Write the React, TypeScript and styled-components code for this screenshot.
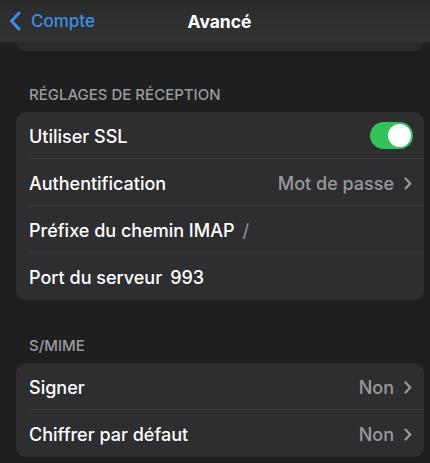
import styled, { createGlobalStyle } from "styled-components";

const Global = createGlobalStyle`
    html, body {
        margin: 0;
        padding: 0;
        background: #1f1f20;
    }
    * {
        box-sizing: border-box;
    }
`;

const Screen = styled.div`
    width: 430px;
    height: 463px;
    overflow: hidden;
    background: #1f1f20;
    font-family: Inter, "Liberation Sans", sans-serif;
    color: #fff;
    display: flex;
    flex-direction: column;
`;
const NavBar = styled.div`
    height: 42px;
    flex-shrink: 0;
    display: grid;
    grid-template-columns: 1fr auto 1fr;
    align-items: center;
    background: linear-gradient(#2b2b2b, #333);
    padding: 0 0 0 9px;
`;
const Back = styled.div`
    display: flex;
    align-items: center;
    gap: 10px;
    color: #3f8ee6;
    font-size: 17px;
    font-weight: 500;
`;
const NavTitle = styled.div`
    font-size: 17.5px;
    font-weight: 700;
`;
const CardTail = styled.div`
    margin: 0 6px 0 16px;
    height: 9px;
    background: #2b2b2d;
    border-radius: 0 0 10px 10px;
`;
const Spacer = styled.div<{ $h: number }>`
    height: ${(p) => p.$h}px;
    flex-shrink: 0;
`;
const SectionHeader = styled.div`
    padding: 0 29px;
    font-size: 15px;
    font-weight: 500;
    color: #9b9b9f;
    height: 20px;
    display: flex;
    align-items: center;
`;
const Card = styled.div`
    margin: 8px 6px 0 16px;
    background: #2e2e30;
    border-radius: 10px;
    overflow: hidden;
`;
const Row = styled.div<{ $last?: boolean }>`
    height: 47px;
    margin-left: 13px;
    padding: 2px 12px 0 0;
    display: flex;
    align-items: center;
    gap: 8px;
    border-bottom: ${(p) => (p.$last ? "none" : "1px solid #3b3b3d")};
    font-size: 18px;
    font-weight: 500;
`;
const Label = styled.span`
    color: #fff;
`;
const Value = styled.span<{ $dim?: boolean }>`
    color: ${(p) => (p.$dim ? "#8a8a8e" : "#fff")};
`;
const Right = styled.div`
    margin-left: auto;
    display: flex;
    align-items: center;
    gap: 10px;
    color: #98989d;
`;
const Toggle = styled.div`
    width: 43px;
    height: 27px;
    border-radius: 14px;
    background: #32c15a;
    margin: -2px -1px 0 0;
    display: flex;
    justify-content: flex-end;
    padding: 2px;
`;
const Knob = styled.div`
    width: 23px;
    height: 23px;
    border-radius: 50%;
    background: #fff;
`;

const Chevron = () => (
    <svg width="8" height="13" viewBox="0 0 8 13">
        <path d="M1.5 1.5 L6.2 6.5 L1.5 11.5" fill="none" stroke="#98989d" strokeWidth="2.3" strokeLinecap="round" strokeLinejoin="round" />
    </svg>
);

const BackChevron = () => (
    <svg width="12" height="20" viewBox="0 0 12 20">
        <path d="M10 2 L2.5 10 L10 18" fill="none" stroke="#3f8ee6" strokeWidth="3" strokeLinecap="round" strokeLinejoin="round" />
    </svg>
);

const smime = [
    { label: "Signer", value: "Non" },
    { label: "Chiffrer par défaut", value: "Non" },
];

const App = () => {
    return (
        <Screen>
            <Global />
            <NavBar>
                <Back>
                    <BackChevron />
                    Compte
                </Back>
                <NavTitle>Avancé</NavTitle>
                <div />
            </NavBar>
            <CardTail />
            <Spacer $h={33} />
            <SectionHeader>RÉGLAGES DE RÉCEPTION</SectionHeader>
            <Card>
                <Row>
                    <Label>Utiliser SSL</Label>
                    <Right>
                        <Toggle>
                            <Knob />
                        </Toggle>
                    </Right>
                </Row>
                <Row>
                    <Label>Authentification</Label>
                    <Right>
                        Mot de passe
                        <Chevron />
                    </Right>
                </Row>
                <Row>
                    <Label>Préfixe du chemin IMAP</Label>
                    <Value $dim>/</Value>
                </Row>
                <Row $last>
                    <Label>Port du serveur</Label>
                    <Value>993</Value>
                </Row>
            </Card>
            <Spacer $h={35} />
            <SectionHeader>S/MIME</SectionHeader>
            <Card>
                {smime.map((r, i) => (
                    <Row key={r.label} $last={i === smime.length - 1}>
                        <Label>{r.label}</Label>
                        <Right>
                            {r.value}
                            <Chevron />
                        </Right>
                    </Row>
                ))}
            </Card>
        </Screen>
    );
};
export default App;
